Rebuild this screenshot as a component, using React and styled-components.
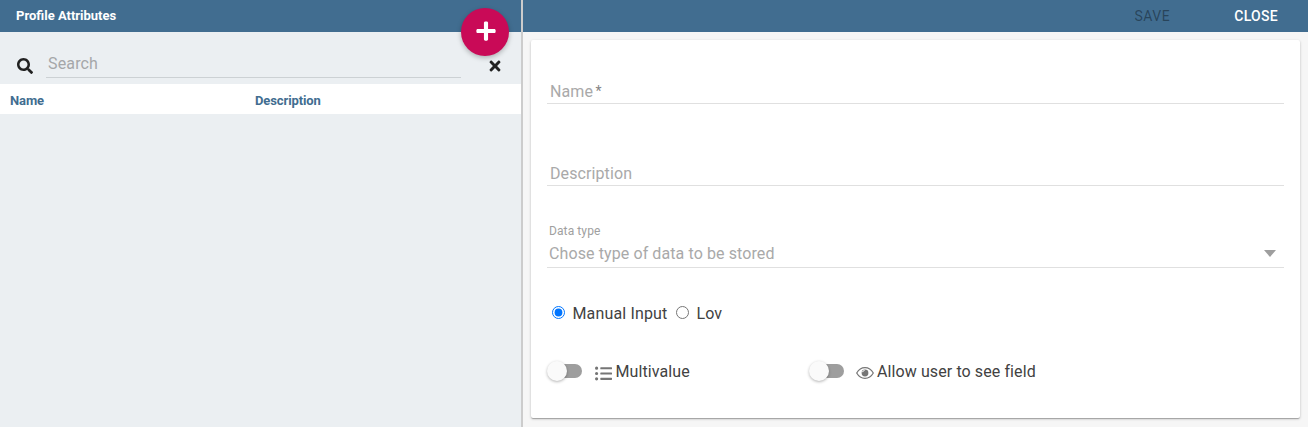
import React from "react";
import styled, { createGlobalStyle } from "styled-components";
import { FaPlus, FaSearch, FaTimes, FaListUl } from "react-icons/fa";

const GlobalStyle = createGlobalStyle`
  *, *::before, *::after { box-sizing: border-box; }
  html, body { margin: 0; padding: 0; overflow: hidden; }
  body { font-family: Roboto, "Liberation Sans", sans-serif; font-size: 16px; color: rgba(0, 0, 0, 0.87); }
`;

const Page = styled.div`
  display: flex;
  height: 100vh;
  min-height: 427px;
`;

const ListPane = styled.section`
  display: flex;
  flex-direction: column;
  width: 523px;
  flex: none;
  border-right: 2px solid #ccc;
  background: #ebeff2;
`;

const DetailPane = styled.section`
  display: flex;
  flex-direction: column;
  flex: 1;
  min-width: 0;
  background: #f6f6f6;
`;

const Toolbar = styled.header`
  position: relative;
  display: flex;
  align-items: center;
  justify-content: ${(p) => (p.$end ? "flex-end" : "flex-start")};
  height: 32px;
  flex: none;
  padding: 0 ${(p) => (p.$end ? "30px" : "16px")};
  background: #416d90;
  color: #fff;
`;

const Title = styled.h1`
  margin: 0;
  font-size: 13px;
  font-weight: 700;
  line-height: 32px;
`;

const AddButton = styled.button`
  position: absolute;
  top: 8px;
  right: 12px;
  z-index: 1;
  display: flex;
  align-items: center;
  justify-content: center;
  width: 48px;
  height: 48px;
  padding: 0 0 2px 2px;
  border: 0;
  border-radius: 50%;
  background: #c90a57;
  color: #fff;
  font-size: 22px;
  box-shadow: 0 2px 5px rgba(0, 0, 0, 0.26);
`;

const TextButton = styled.button`
  margin-left: 64px;
  padding: 0;
  border: 0;
  background: none;
  font: 500 14px/32px Roboto, sans-serif;
  letter-spacing: 0.3px;
  color: #fff;
  &:disabled { font-weight: 400; letter-spacing: 0.5px; color: rgba(0, 0, 0, 0.38); }
`;

const SearchBar = styled.div`
  display: flex;
  height: 52px;
  padding: 14px 18px 6px 17px;
  font-size: 16px;
`;

const SearchIcon = styled(FaSearch)`
  margin-top: 12px;
  color: #212121;
`;

const ClearIcon = styled(FaTimes)`
  margin: 12px 0 0 26px;
  color: #212121;
`;

const SearchField = styled.input`
  flex: 1;
  min-width: 0;
  height: 32px;
  margin-left: 13px;
  padding: 4px 2px 0;
  border: 0;
  border-bottom: 1px solid #ccd1d4;
  outline: 0;
  background: none;
  font: 400 16px Roboto, sans-serif;
  letter-spacing: 0.15px;
  &::placeholder { color: #a5a7a9; opacity: 1; }
`;

const TableHead = styled.div`
  display: grid;
  grid-template-columns: 245px 1fr;
  height: 30px;
  padding: 1px 10px 0;
  background: #fff;
  color: #416d90;
  font-size: 13px;
  font-weight: 700;
  letter-spacing: -0.1px;
  line-height: 31px;
`;

const Card = styled.form`
  height: 378px;
  margin: 8px 8px 0;
  padding: 32px 16px 0;
  border-radius: 2px;
  background: #fff;
  letter-spacing: 0.1px;
  box-shadow: 0 1px 3px rgba(0, 0, 0, 0.2), 0 1px 1px rgba(0, 0, 0, 0.14), 0 2px 1px -1px rgba(0, 0, 0, 0.12);
`;

const Field = styled.div`
  height: 32px;
  margin-bottom: 50px;
  padding: 8px 3px 0;
  border-bottom: 1px solid #e0e0e0;
  color: #a9a9a9;
  line-height: 24px;
`;

const Required = styled.span`
  margin-left: 2.5px;
  font-size: 14px;
  vertical-align: 1px;
  line-height: 1;
  color: #858585;
`;

const SelectLabel = styled.div`
  margin-top: -14px;
  padding-left: 2px;
  color: #a0a0a0;
  font-size: 12px;
  line-height: 18px;
`;

const SelectValue = styled.div`
  display: flex;
  align-items: center;
  justify-content: space-between;
  height: 28px;
  padding: 0 8px 0 2px;
  border-bottom: 1px solid #e0e0e0;
  color: #a9a9a9;
`;

const Caret = styled.span`
  border: 6px solid transparent;
  border-top: 7px solid #9e9e9e;
  border-bottom: 0;
`;

const RadioRow = styled.div`
  display: flex;
  align-items: center;
  height: 24px;
  margin-top: 33px;
  padding-left: 5px;
  color: #424242;
  letter-spacing: 0.15px;
`;

const Radio = styled.input`
  width: 13px;
  height: 13px;
  margin: 0 7.5px 2px 0;
`;

const RadioLabel = styled.label`
  display: flex;
  align-items: center;
  margin-right: 8.5px;
`;

const SwitchRow = styled.div`
  display: grid;
  grid-template-columns: 262px 1fr;
  margin-top: 34px;
`;

const SwitchLabel = styled.label`
  display: flex;
  align-items: center;
  height: 24px;
  color: #424242;
`;

const Track = styled.span`
  display: flex;
  align-items: center;
  width: 34px;
  height: 14px;
  margin: 0 13px 0 1px;
  border-radius: 7px;
  background: #9e9e9e;
`;

const Thumb = styled.span`
  width: 20px;
  height: 20px;
  flex: none;
  margin-left: -1px;
  border-radius: 50%;
  background: #fafafa;
  box-shadow: 0 1px 3px rgba(0, 0, 0, 0.3);
`;

const ListIcon = styled(FaListUl)`
  flex: none;
  width: 17px;
  height: 17px;
  margin: 4px 3.5px 0 0;
  color: #757575;
`;

const EyeSvg = styled.svg`
  flex: none;
  width: 18px;
  height: 14px;
  margin: 3px 3px 0 -1px;
  color: #757575;
`;

const EyeIcon = () => (
  <EyeSvg viewBox="0 0 18 14" fill="none" stroke="currentColor">
    <path d="M.7 7C4.8-.2 13.2-.2 17.3 7 13.2 14.2 4.8 14.2.7 7Z" strokeWidth="1.2" />
    <circle cx="9" cy="7" r="3.4" fill="currentColor" stroke="none" />
    <path d="M6.4 6.2A2.6 2.6 0 0 1 8.6 4.4" stroke="#fff" strokeWidth="1" />
  </EyeSvg>
);

const Switch = ({ icon, children }) => (
  <SwitchLabel>
    <Track><Thumb /></Track>
    {icon}
    {children}
  </SwitchLabel>
);

export default function App() {
  return (
    <Page>
      <GlobalStyle />
      <ListPane>
        <Toolbar>
          <Title>Profile Attributes</Title>
          <AddButton aria-label="Add"><FaPlus /></AddButton>
        </Toolbar>
        <SearchBar>
          <SearchIcon />
          <SearchField placeholder="Search" />
          <ClearIcon />
        </SearchBar>
        <TableHead>
          <span>Name</span>
          <span>Description</span>
        </TableHead>
      </ListPane>
      <DetailPane>
        <Toolbar $end>
          <TextButton disabled>SAVE</TextButton>
          <TextButton>CLOSE</TextButton>
        </Toolbar>
        <Card>
          <Field>Name<Required>*</Required></Field>
          <Field>Description</Field>
          <SelectLabel>Data type</SelectLabel>
          <SelectValue>Chose type of data to be stored<Caret /></SelectValue>
          <RadioRow>
            <RadioLabel><Radio type="radio" name="source" defaultChecked />Manual Input</RadioLabel>
            <RadioLabel><Radio type="radio" name="source" />Lov</RadioLabel>
          </RadioRow>
          <SwitchRow>
            <Switch icon={<ListIcon />}>Multivalue</Switch>
            <Switch icon={<EyeIcon />}>Allow user to see field</Switch>
          </SwitchRow>
        </Card>
      </DetailPane>
    </Page>
  );
}
